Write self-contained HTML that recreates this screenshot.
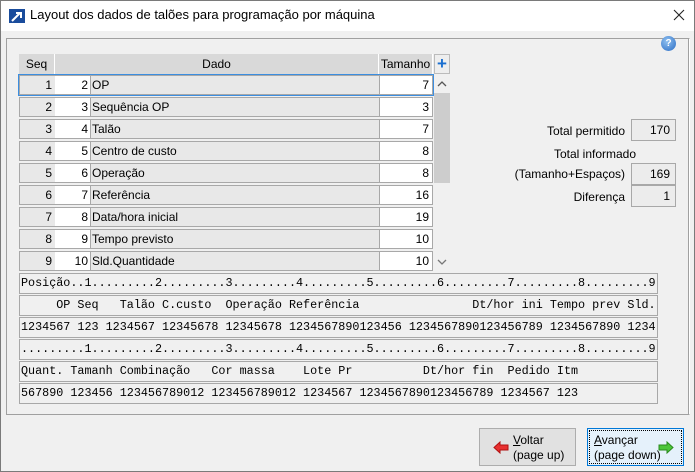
<!DOCTYPE html>
<html><head><meta charset="utf-8"><style>
*{margin:0;padding:0;box-sizing:border-box}
body{width:695px;height:472px;overflow:hidden;background:#f0f0f0;font-family:"Liberation Sans",sans-serif;font-size:12px;color:#000;position:relative}
.a{position:absolute}
.title{left:0;top:0;width:695px;height:31px;background:#fff;border:1px solid #888;border-bottom:none}
.frame{left:0;top:0;width:695px;height:472px;border:1px solid #7a7a7a}
.panel{left:6px;top:38px;width:684px;height:377px;border:1px solid #a0a0a0;border-right-color:#fff;border-bottom-color:#a0a0a0;box-shadow:inset -1px 0 #a0a0a0}
.hdr{top:54px;height:20px;background:#d9d9d9;border-right:1px solid #fff;text-align:center;line-height:20px}
.cell{height:20px;border:1px solid #a8a8a8;line-height:18px;padding:0 3px;white-space:nowrap}
.g{background:#e8e8e8}.w{background:#fff}
.r{text-align:right}
.mono{left:19px;width:639px;height:21px;border:1px solid #a8a8a8;font-family:"Liberation Mono",monospace;font-size:11.75px;line-height:19px;white-space:pre;color:#000;padding-left:1px}
.box{left:631px;width:45px;height:22px;border:1px solid #a8a8a8;background:#ececec;text-align:right;padding-right:5px;line-height:20px}
.lbl{text-align:right;width:200px;left:425px}
.btn{top:428px;width:97px;height:38px;border:1px solid #adadad;background:#e1e1e1;line-height:15px;font-size:12px}
</style></head><body>
<div class="a title"></div>
<div class="a frame"></div>
<svg class="a" style="left:9px;top:9px" width="16" height="14"><rect width="16" height="14" fill="#1a4c9c"/><path d="M3 12 L11 4 M7 4 H12 V9" stroke="#fff" stroke-width="2" fill="none"/></svg>
<div class="a" style="left:30px;top:7px;font-size:13px">Layout dos dados de talões para programação por máquina</div>
<svg class="a" style="left:673px;top:9px" width="12" height="12"><path d="M1 1 L11 11 M11 1 L1 11" stroke="#222" stroke-width="1.1"/></svg>
<div class="a panel"></div>
<div class="a" style="left:661px;top:36px;width:15px;height:15px;border-radius:50%;background:radial-gradient(circle at 40% 35%,#8fc0f0,#2a6cc4);color:#fff;font-size:10px;font-weight:bold;text-align:center;line-height:15px">?</div>

<div class="a hdr" style="left:19px;width:36px">Seq</div>
<div class="a hdr" style="left:55px;width:324px">Dado</div>
<div class="a hdr" style="left:379px;width:54px">Tamanho</div>
<div class="a" style="left:434px;top:54px;width:16px;height:20px;border:1px solid #bbb;background:#eee;color:#1a6fd0;font-weight:bold;font-size:17px;line-height:17px;text-align:center">+</div>
<div class="a" style="left:434px;top:93px;width:16px;height:90px;background:#cdcdcd"></div>
<svg class="a" style="left:437px;top:81px" width="10" height="6"><path d="M1 5 L5 1 L9 5" stroke="#555" stroke-width="1.3" fill="none"/></svg>
<svg class="a" style="left:437px;top:259px" width="10" height="6"><path d="M1 1 L5 5 L9 1" stroke="#777" stroke-width="1.3" fill="none"/></svg>

<div id="rows"></div>
<script>
var d=[["1","2","OP","7"],["2","3","Sequência OP","3"],["3","4","Talão","7"],["4","5","Centro de custo","8"],["5","6","Operação","8"],["6","7","Referência","16"],["7","8","Data/hora inicial","19"],["8","9","Tempo previsto","10"],["9","10","Sld.Quantidade","10"]];
var h="";d.forEach(function(r,i){var y=75+i*22;
h+='<div class="a cell g r" style="left:19px;top:'+y+'px;width:37px">'+r[0]+'</div>';
h+='<div class="a cell w r" style="left:55px;top:'+y+'px;width:36px;border-left:none;padding-right:2px">'+r[1]+'</div>';
h+='<div class="a cell g" style="left:90px;top:'+y+'px;width:290px;padding-left:1px">'+r[2]+'</div>';
h+='<div class="a cell w r" style="left:379px;top:'+y+'px;width:54px">'+r[3]+'</div>';});
document.getElementById("rows").innerHTML=h;
</script>
<div class="a" style="left:18px;top:74px;width:416px;height:22px;border:1px solid #3c8ee0;pointer-events:none"></div>

<div class="a mono" style="top:273px">Posição..1.........2.........3.........4.........5.........6.........7.........8.........9</div>
<div class="a mono" style="top:295px">     OP Seq   Talão C.custo  Operação Referência                Dt/hor ini Tempo prev Sld.</div>
<div class="a mono" style="top:317px">1234567 123 1234567 12345678 12345678 1234567890123456 1234567890123456789 1234567890 1234</div>
<div class="a mono" style="top:339px">.........1.........2.........3.........4.........5.........6.........7.........8.........9</div>
<div class="a mono" style="top:361px">Quant. Tamanh Combinação   Cor massa    Lote Pr          Dt/hor fin  Pedido Itm</div>
<div class="a mono" style="top:383px">567890 123456 123456789012 123456789012 1234567 1234567890123456789 1234567 123</div>

<div class="a lbl" style="top:124px">Total permitido</div>
<div class="a box" style="top:119px">170</div>
<div class="a" style="left:540px;top:147px;width:110px;text-align:center">Total informado</div>
<div class="a lbl" style="top:167px">(Tamanho+Espaços)</div>
<div class="a box" style="top:163px">169</div>
<div class="a lbl" style="top:190px">Diferença</div>
<div class="a box" style="top:185px">1</div>

<div class="a btn" style="left:479px">
<svg class="a" style="left:13px;top:12px" width="16" height="13"><path d="M1 6.5 L7 1 V4 H15 V9 H7 V12 Z" fill="#e83030" stroke="#b01010"/></svg>
<div class="a" style="left:33px;top:4px"><u>V</u>oltar<br>(page up)</div></div>
<div class="a btn" style="left:587px;border:1px solid #0078d7;background:#e5f1fb;outline:1px dotted #000;outline-offset:-3px">
<div class="a" style="left:6px;top:4px"><u>A</u>vançar<br>(page down)</div>
<svg class="a" style="left:70px;top:12px" width="16" height="13"><path d="M15 6.5 L9 1 V4 H1 V9 H9 V12 Z" fill="#4cc63a" stroke="#2a8a1e"/></svg></div>
</body></html>
